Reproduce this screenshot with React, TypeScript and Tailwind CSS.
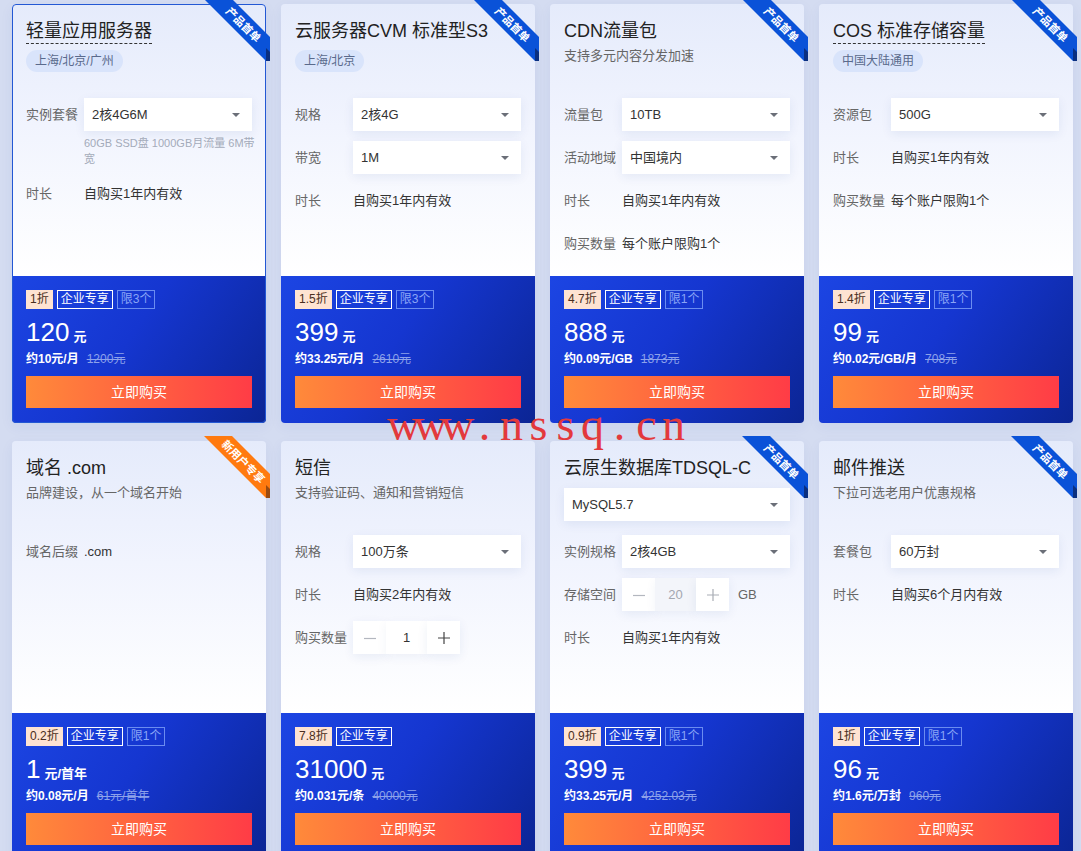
import React from "react";

type Row =
  | { kind: "select"; label: string; value: string; note?: [string, string] }
  | { kind: "text"; label: string; value: string }
  | { kind: "stepper"; label: string; value: string; suffix?: string; muted?: boolean };

type CardData = {
  title: string;
  underline?: boolean;
  tag?: string;
  subtitle?: string;
  topSelect?: string;
  ribbon?: "blue" | "orange";
  rows: Row[];
  discount: string;
  limit?: string;
  price: string;
  unit: string;
  per: string;
  orig: string;
  active?: boolean;
};

const cards: CardData[] = [
  {
    title: "轻量应用服务器",
    underline: true,
    tag: "上海/北京/广州",
    ribbon: "blue",
    active: true,
    rows: [
      { kind: "select", label: "实例套餐", value: "2核4G6M", note: ["60GB SSD盘 1000GB月流量 6M带", "宽"] },
      { kind: "text", label: "时长", value: "自购买1年内有效" },
    ],
    discount: "1折",
    limit: "限3个",
    price: "120",
    unit: "元",
    per: "约10元/月",
    orig: "1200元",
  },
  {
    title: "云服务器CVM 标准型S3",
    tag: "上海/北京",
    ribbon: "blue",
    rows: [
      { kind: "select", label: "规格", value: "2核4G" },
      { kind: "select", label: "带宽", value: "1M" },
      { kind: "text", label: "时长", value: "自购买1年内有效" },
    ],
    discount: "1.5折",
    limit: "限3个",
    price: "399",
    unit: "元",
    per: "约33.25元/月",
    orig: "2610元",
  },
  {
    title: "CDN流量包",
    subtitle: "支持多元内容分发加速",
    ribbon: "blue",
    rows: [
      { kind: "select", label: "流量包", value: "10TB" },
      { kind: "select", label: "活动地域", value: "中国境内" },
      { kind: "text", label: "时长", value: "自购买1年内有效" },
      { kind: "text", label: "购买数量", value: "每个账户限购1个" },
    ],
    discount: "4.7折",
    limit: "限1个",
    price: "888",
    unit: "元",
    per: "约0.09元/GB",
    orig: "1873元",
  },
  {
    title: "COS 标准存储容量",
    underline: true,
    tag: "中国大陆通用",
    ribbon: "blue",
    rows: [
      { kind: "select", label: "资源包", value: "500G" },
      { kind: "text", label: "时长", value: "自购买1年内有效" },
      { kind: "text", label: "购买数量", value: "每个账户限购1个" },
    ],
    discount: "1.4折",
    limit: "限1个",
    price: "99",
    unit: "元",
    per: "约0.02元/GB/月",
    orig: "708元",
  },
  {
    title: "域名 .com",
    subtitle: "品牌建设，从一个域名开始",
    ribbon: "orange",
    rows: [{ kind: "text", label: "域名后缀", value: ".com" }],
    discount: "0.2折",
    limit: "限1个",
    price: "1",
    unit: "元/首年",
    per: "约0.08元/月",
    orig: "61元/首年",
  },
  {
    title: "短信",
    subtitle: "支持验证码、通知和营销短信",
    rows: [
      { kind: "select", label: "规格", value: "100万条" },
      { kind: "text", label: "时长", value: "自购买2年内有效" },
      { kind: "stepper", label: "购买数量", value: "1" },
    ],
    discount: "7.8折",
    price: "31000",
    unit: "元",
    per: "约0.031元/条",
    orig: "40000元",
  },
  {
    title: "云原生数据库TDSQL-C",
    topSelect: "MySQL5.7",
    ribbon: "blue",
    rows: [
      { kind: "select", label: "实例规格", value: "2核4GB" },
      { kind: "stepper", label: "存储空间", value: "20", suffix: "GB", muted: true },
      { kind: "text", label: "时长", value: "自购买1年内有效" },
    ],
    discount: "0.9折",
    limit: "限1个",
    price: "399",
    unit: "元",
    per: "约33.25元/月",
    orig: "4252.03元",
  },
  {
    title: "邮件推送",
    subtitle: "下拉可选老用户优惠规格",
    ribbon: "blue",
    rows: [
      { kind: "select", label: "套餐包", value: "60万封" },
      { kind: "text", label: "时长", value: "自购买6个月内有效" },
    ],
    discount: "1折",
    limit: "限1个",
    price: "96",
    unit: "元",
    per: "约1.6元/万封",
    orig: "960元",
  },
];

function Caret() {
  return (
    <svg width="8" height="4" viewBox="0 0 8 4" className="shrink-0">
      <path d="M0 0H8L4 4Z" fill="#6b6f78" />
    </svg>
  );
}

function Select({ value }: { value: string }) {
  return (
    <div className="flex h-[33px] flex-1 items-center justify-between bg-white pl-[8px] pr-[12px] text-[13px] text-[#333] shadow-[0_3px_10px_rgba(30,60,140,0.08)]">
      <span>{value}</span>
      <Caret />
    </div>
  );
}

function Stepper({ value, muted }: { value: string; muted?: boolean }) {
  const minusColor = "#b3b7bf";
  const plusColor = muted ? "#a9adb5" : "#444";
  return (
    <div className="flex h-[33px]">
      <div className="flex w-[33px] items-center justify-center bg-white shadow-[0_3px_10px_rgba(30,60,140,0.08)]">
        <svg width="12" height="12" viewBox="0 0 12 12">
          <path d="M0 6.5H12" stroke={minusColor} strokeWidth="1.2" />
        </svg>
      </div>
      <div
        className={`flex w-[41px] items-center justify-center text-[13px] shadow-[0_3px_10px_rgba(30,60,140,0.06)] ${
          muted ? "bg-[#f3f5fa] text-[#a3a7b0]" : "bg-white text-[#333]"
        }`}
      >
        {value}
      </div>
      <div className="flex w-[33px] items-center justify-center bg-white shadow-[0_3px_10px_rgba(30,60,140,0.08)]">
        <svg width="12" height="12" viewBox="0 0 12 12">
          <path d="M0 6H12M6 0V12" stroke={plusColor} strokeWidth="1.2" />
        </svg>
      </div>
    </div>
  );
}

function Ribbon({ kind }: { kind: "blue" | "orange" }) {
  const color = kind === "blue" ? "#0a52d8" : "#ff7a0f";
  const dark = kind === "blue" ? "#0a2f80" : "#9a4a10";
  const text = kind === "blue" ? "产品首单" : "新用户专享";
  return (
    <svg
      className="pointer-events-none absolute -right-[4px] -top-[5px] z-20"
      width="66"
      height="62"
      viewBox="0 0 66 62"
    >
      <polygon points="0,0 28,0 66,38 66,62 62,62" fill={color} />
      <polygon points="62,49 66,53 66,62 62,62" fill={dark} />
      <text
        x="40"
        y="25"
        transform="rotate(45 40 25)"
        textAnchor="middle"
        dominantBaseline="central"
        fill="#fff"
        fontSize="11"
        fontWeight="700"
        fontFamily="'Noto Sans CJK SC', sans-serif"
      >
        {text}
      </text>
    </svg>
  );
}

function FormRow({ row }: { row: Row }) {
  if (row.kind === "select") {
    return (
      <div>
        <div className="flex h-[33px] items-center">
          <div className="w-[58px] shrink-0 text-[13px] text-[#666]">{row.label}</div>
          <Select value={row.value} />
        </div>
        {row.note && (
          <div className="ml-[58px] mt-[4px] whitespace-nowrap text-[11px] leading-[16px] text-[#a4abba]">
            {row.note[0]}
            <br />
            {row.note[1]}
          </div>
        )}
      </div>
    );
  }
  if (row.kind === "stepper") {
    return (
      <div className="flex h-[33px] items-center">
        <div className="w-[58px] shrink-0 text-[13px] text-[#666]">{row.label}</div>
        <Stepper value={row.value} muted={row.muted} />
        {row.suffix && <span className="ml-[9px] text-[13px] text-[#666]">{row.suffix}</span>}
      </div>
    );
  }
  return (
    <div className="flex h-[33px] items-center">
      <div className="w-[58px] shrink-0 text-[13px] text-[#666]">{row.label}</div>
      <div className="text-[13px] text-[#333]">{row.value}</div>
    </div>
  );
}

function Card({ c }: { c: CardData }) {
  return (
    <div className="relative flex h-[419px] flex-col rounded-[4px] shadow-[0_4px_14px_rgba(30,60,150,0.06)]">
      {c.ribbon && <Ribbon kind={c.ribbon} />}
      {c.active && (
        <div className="pointer-events-none absolute inset-0 z-10 rounded-[4px] border border-[#2358d4]" />
      )}
      <div className="h-[272px] rounded-t-[4px] bg-[linear-gradient(180deg,#e5ebfb_0%,#f1f4fe_45%,#ffffff_100%)] px-[14px]">
        <div className="h-[94px] pt-[15px]">
          <div
            className={`inline-block text-[18px] leading-[24px] text-[#222] ${
              c.underline ? "border-b border-dashed border-[#333]" : ""
            }`}
          >
            {c.title}
          </div>
          {c.tag && (
            <div>
              <span className="mt-[6px] inline-flex h-[22px] items-center rounded-full bg-[#d9e4fb] px-[9px] text-[12px] text-[#5a6a8c]">
                {c.tag}
              </span>
            </div>
          )}
          {c.subtitle && <div className="mt-[2px] text-[13px] leading-[20px] text-[#666]">{c.subtitle}</div>}
          {c.topSelect && (
            <div className="mt-[7px] flex">
              <Select value={c.topSelect} />
            </div>
          )}
        </div>
        <div className="flex flex-col gap-[10px]">
          {c.rows.map((r, i) => (
            <FormRow key={i} row={r} />
          ))}
        </div>
      </div>
      <div className="h-[147px] rounded-b-[4px] bg-[linear-gradient(125deg,#1c45e3_0%,#1536d0_45%,#0b2594_100%)] px-[14px] pt-[14px]">
        <div className="flex gap-[4px] text-[12px]">
          <span className="h-[19px] bg-[#fee3d2] px-[4px] leading-[19px] text-[#4a2e20]">{c.discount}</span>
          <span className="h-[19px] border border-white px-[3px] leading-[17px] text-white">企业专享</span>
          {c.limit && (
            <span className="h-[19px] border border-[#6b8cf0] px-[3px] leading-[17px] text-[#8aa5f6]">{c.limit}</span>
          )}
        </div>
        <div className="mt-[8px] flex h-[30px] items-baseline overflow-visible leading-[30px] text-white">
          <span className="text-[26px]">{c.price}</span>
          <span className="ml-[4px] text-[13px] font-bold">{c.unit}</span>
        </div>
        <div className="mt-[3px] flex h-[18px] items-center text-[12px] leading-[18px]">
          <span className="font-bold text-white">{c.per}</span>
          <span className="ml-[8px] text-[#8da2ea] line-through">{c.orig}</span>
        </div>
        <button className="mt-[8px] flex h-[32px] w-full items-center justify-center bg-[linear-gradient(90deg,#ff8a3a,#ff3c46)] text-[14px] text-white">
          立即购买
        </button>
      </div>
    </div>
  );
}

export default function App() {
  const mark = "www.nssq.cn".split("");
  return (
    <div className="relative min-h-[880px] w-[1081px] bg-[#d4dcf1] pl-[12px] pt-[4px] font-['Liberation_Sans','Noto_Sans_CJK_SC',sans-serif]">
      <div className="grid grid-cols-[repeat(4,254px)] gap-x-[15px] gap-y-[18px]">
        {cards.map((c, i) => (
          <Card key={i} c={c} />
        ))}
      </div>
      <div className="pointer-events-none absolute left-[390px] top-[402px] z-30 flex font-['Liberation_Serif',serif] text-[46px] leading-none text-[#e3393c]">
        {mark.map((ch, i) => (
          <span key={i} className="flex w-[27px] justify-center">
            {ch}
          </span>
        ))}
      </div>
    </div>
  );
}
